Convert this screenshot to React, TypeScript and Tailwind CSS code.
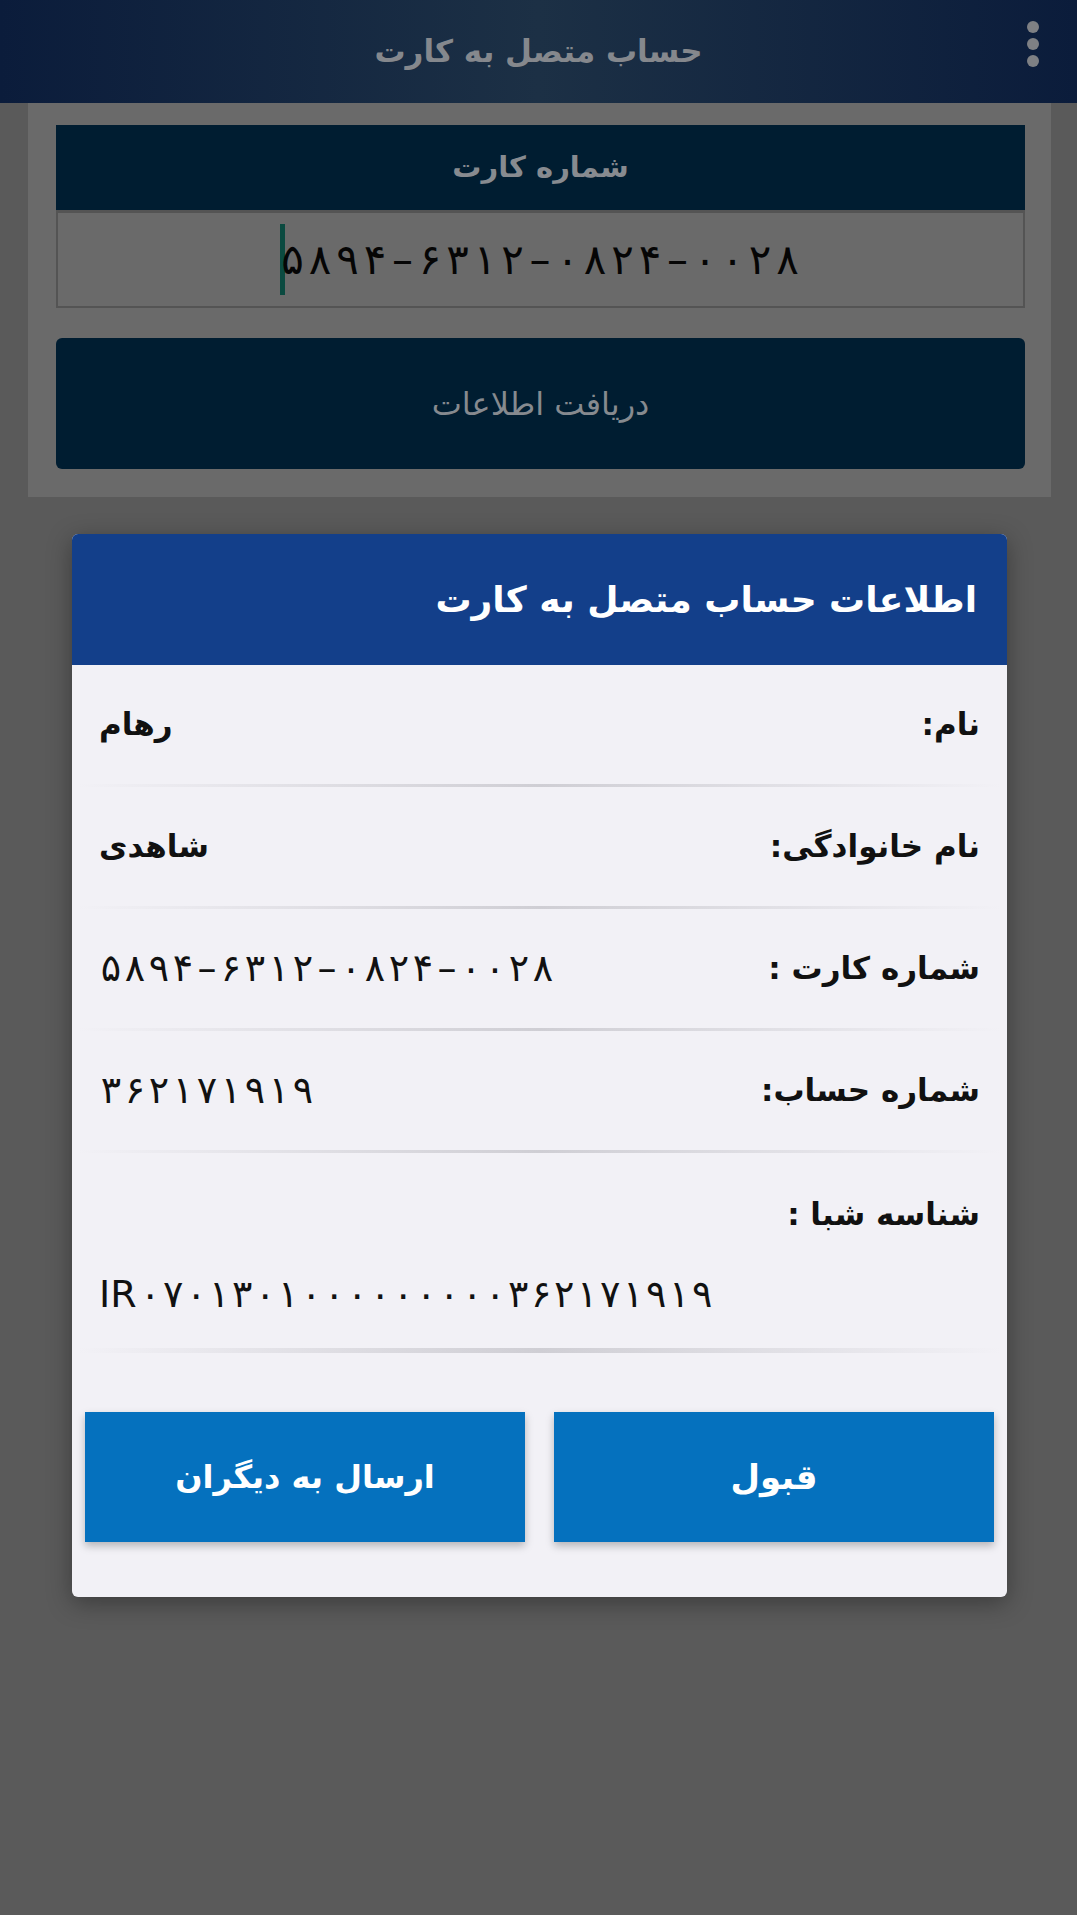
import React from 'react';

// fixed-width slots per character; letter-spacing is ignored on Arabic-script runs
const Digits = ({ text, slot, className = '' }: { text: string; slot: string; className?: string }) => (
  <span dir="ltr" className={`inline-flex ${className}`}>
    {Array.from(text).map((ch, i) => (
      <span key={i} className={`${slot} text-center`}>
        {ch}
      </span>
    ))}
  </span>
);

const rows = [
  { label: 'نام:', value: 'رهام', num: false },
  { label: 'نام خانوادگی:', value: 'شاهدی', num: false },
  { label: 'شماره کارت :', value: '۵۸۹۴–۶۳۱۲–۰۸۲۴–۰۰۲۸', num: true },
  { label: 'شماره حساب:', value: '۳۶۲۱۷۱۹۱۹', num: true },
];

const Separator = ({ thick = false }: { thick?: boolean }) => (
  <div
    className={`mx-[6px] bg-linear-to-r from-[#f2f1f6] via-[#cfced4] to-[#f2f1f6] ${
      thick ? 'h-[5px]' : 'h-[3px]'
    }`}
  />
);

const InfoRow = ({ label, value, num }: { label: string; value: string; num: boolean }) => (
  <>
    <div className="h-[119px] flex items-center justify-between px-[27px] text-[#111] font-bold text-[31px]">
      <span>{label}</span>
      {num ? <Digits text={value} slot="w-[24px]" className="font-normal text-[38px]" /> : <span>{value}</span>}
    </div>
    <Separator />
  </>
);

export default function App() {
  return (
    <div className="w-[1077px] min-h-[1915px] bg-[#5a5a5a] font-['DejaVu_Sans',sans-serif]" dir="rtl">
      {/* app bar */}
      <div className="h-[103px] relative flex items-center justify-center bg-linear-to-r from-[#0b1c3b] via-[#1c3045] to-[#0b1c3b]">
        <span className="text-[#85888d] text-[31px] font-bold">حساب متصل به کارت</span>
        <div className="absolute left-[1027px] top-[21px] flex flex-col gap-[5px]">
          <span className="w-[12px] h-[12px] rounded-full bg-[#7e8084]" />
          <span className="w-[12px] h-[12px] rounded-full bg-[#7e8084]" />
          <span className="w-[12px] h-[12px] rounded-full bg-[#7e8084]" />
        </div>
      </div>

      {/* dimmed form behind dialog */}
      <div className="ml-[28px] mr-[26px] bg-[#6a6a6a] pt-[22px] pl-[28px] pr-[26px] pb-[28px]">
        <div className="h-[85px] bg-[#001d31] flex items-center justify-center">
          <span className="text-[#878b90] text-[29px] font-bold">شماره کارت</span>
        </div>
        <div className="h-[98px] border-2 border-[#545454] border-t-[3px] flex items-center justify-center">
          <div dir="ltr" className="flex items-center">
            <span className="w-[5px] h-[71px] bg-[#0b4a40]" />
            <Digits
              text="۵۸۹۴–۶۳۱۲–۰۸۲۴–۰۰۲۸"
              slot="w-[27.5px]"
              className="text-[#050505] text-[42px] -ml-[6px]"
            />
          </div>
        </div>
        <button className="mt-[30px] w-full h-[131px] rounded-[6px] bg-[#001d31] flex items-center justify-center">
          <span className="text-[#868a8f] text-[32px]">دریافت اطلاعات</span>
        </button>
      </div>

      {/* dialog */}
      <div className="mt-[37px] ml-[72px] mr-[70px] rounded-[6px] overflow-hidden bg-[#f2f1f6] shadow-[0_6px_24px_rgba(0,0,0,0.35)]">
        <div className="h-[131px] bg-[#133f8a] flex items-center px-[30px]">
          <span className="text-white text-[36px] font-bold">اطلاعات حساب متصل به کارت</span>
        </div>

        {rows.map((r) => (
          <InfoRow key={r.label} {...r} />
        ))}

        <div className="h-[195px] px-[27px] pt-[38px] text-[#111]">
          <div className="text-[31px] font-bold">شناسه شبا :</div>
          <div dir="ltr" className="mt-[28px] flex items-baseline text-[38px]">
            <span className="mr-[2px]">IR</span>
            <Digits text="۰۷۰۱۳۰۱۰۰۰۰۰۰۰۰۰۳۶۲۱۷۱۹۱۹" slot="w-[23px]" />
          </div>
        </div>
        <Separator thick />

        <div className="pt-[59px] pb-[55px] px-[13px] flex gap-[29px]">
          <button className="flex-1 h-[130px] bg-[#0571be] shadow-[0_4px_8px_rgba(0,0,0,0.25)] flex items-center justify-center">
            <span className="text-white text-[34px] font-bold">قبول</span>
          </button>
          <button className="flex-1 h-[130px] bg-[#0571be] shadow-[0_4px_8px_rgba(0,0,0,0.25)] flex items-center justify-center">
            <span className="text-white text-[32px] font-bold">ارسال به دیگران</span>
          </button>
        </div>
      </div>
    </div>
  );
}
